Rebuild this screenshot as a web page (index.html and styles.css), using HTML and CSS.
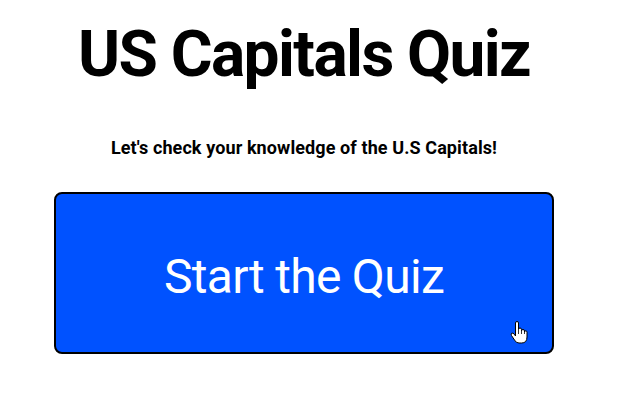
FILE: index.html
```html
<!DOCTYPE html>
<html lang="en">
<head>
<meta charset="utf-8">
<title>US Capitals Quiz</title>
<link rel="stylesheet" href="styles.css">
</head>
<body>
<main class="page">
  <h1 class="title">US Capitals Quiz</h1>
  <p class="subtitle">Let's check your knowledge of the U.S Capitals!</p>
  <button class="start-btn" type="button">
    Start the Quiz
    <svg class="cursor" viewBox="0 0 18 23" width="18" height="23" aria-hidden="true">
      <path d="M5.5 2 Q5.5 0.5 7 0.5 Q8.5 0.5 8.5 2 V8.5 Q8.5 7 10 7 Q11.5 7 11.5 8.5 V9.8 Q11.5 8.5 13 8.5 Q14.5 8.5 14.5 10 V11 Q14.5 9.8 15.8 9.8 Q17 9.8 17 11.2 V16 Q17 22 11.5 22 H9 Q6 22 4.5 19 L1.5 14.5 Q0.6 12.8 1.8 12.2 Q3 11.6 4.2 13.2 L5.5 15 Z" fill="#fff" stroke="#000" stroke-width="1"/>
      <path d="M8.5 8.5 V13 M11.5 9.8 V13 M14.5 11 V13" fill="none" stroke="#000" stroke-width="0.8"/>
    </svg>
  </button>
</main>
</body>
</html>
```

FILE: styles.css
```css
html, body {
  margin: 0;
  padding: 0;
  background: #fff;
}

.page {
  width: 608px;
  display: flex;
  flex-direction: column;
  align-items: center;
  font-family: Roboto, "Liberation Sans", sans-serif;
  color: #000;
}

.title {
  margin: 17px 0 0;
  font-size: 64px;
  line-height: 76px;
  font-weight: 700;
  letter-spacing: -1.6px;
}

.subtitle {
  margin: 44px 0 0;
  font-size: 18px;
  line-height: 22px;
  font-weight: 700;
  letter-spacing: 0.1px;
}

.start-btn {
  position: relative;
  margin-top: 33px;
  width: 500px;
  height: 162px;
  box-sizing: border-box;
  border: 2px solid #000;
  border-radius: 8px;
  background: #0052ff;
  color: #fff;
  font-family: Roboto, "Liberation Sans", sans-serif;
  font-size: 48px;
  font-weight: 400;
  letter-spacing: -0.7px;
  padding: 7px 0 0;
}

.cursor {
  position: absolute;
  left: 454px;
  top: 127px;
}
```
